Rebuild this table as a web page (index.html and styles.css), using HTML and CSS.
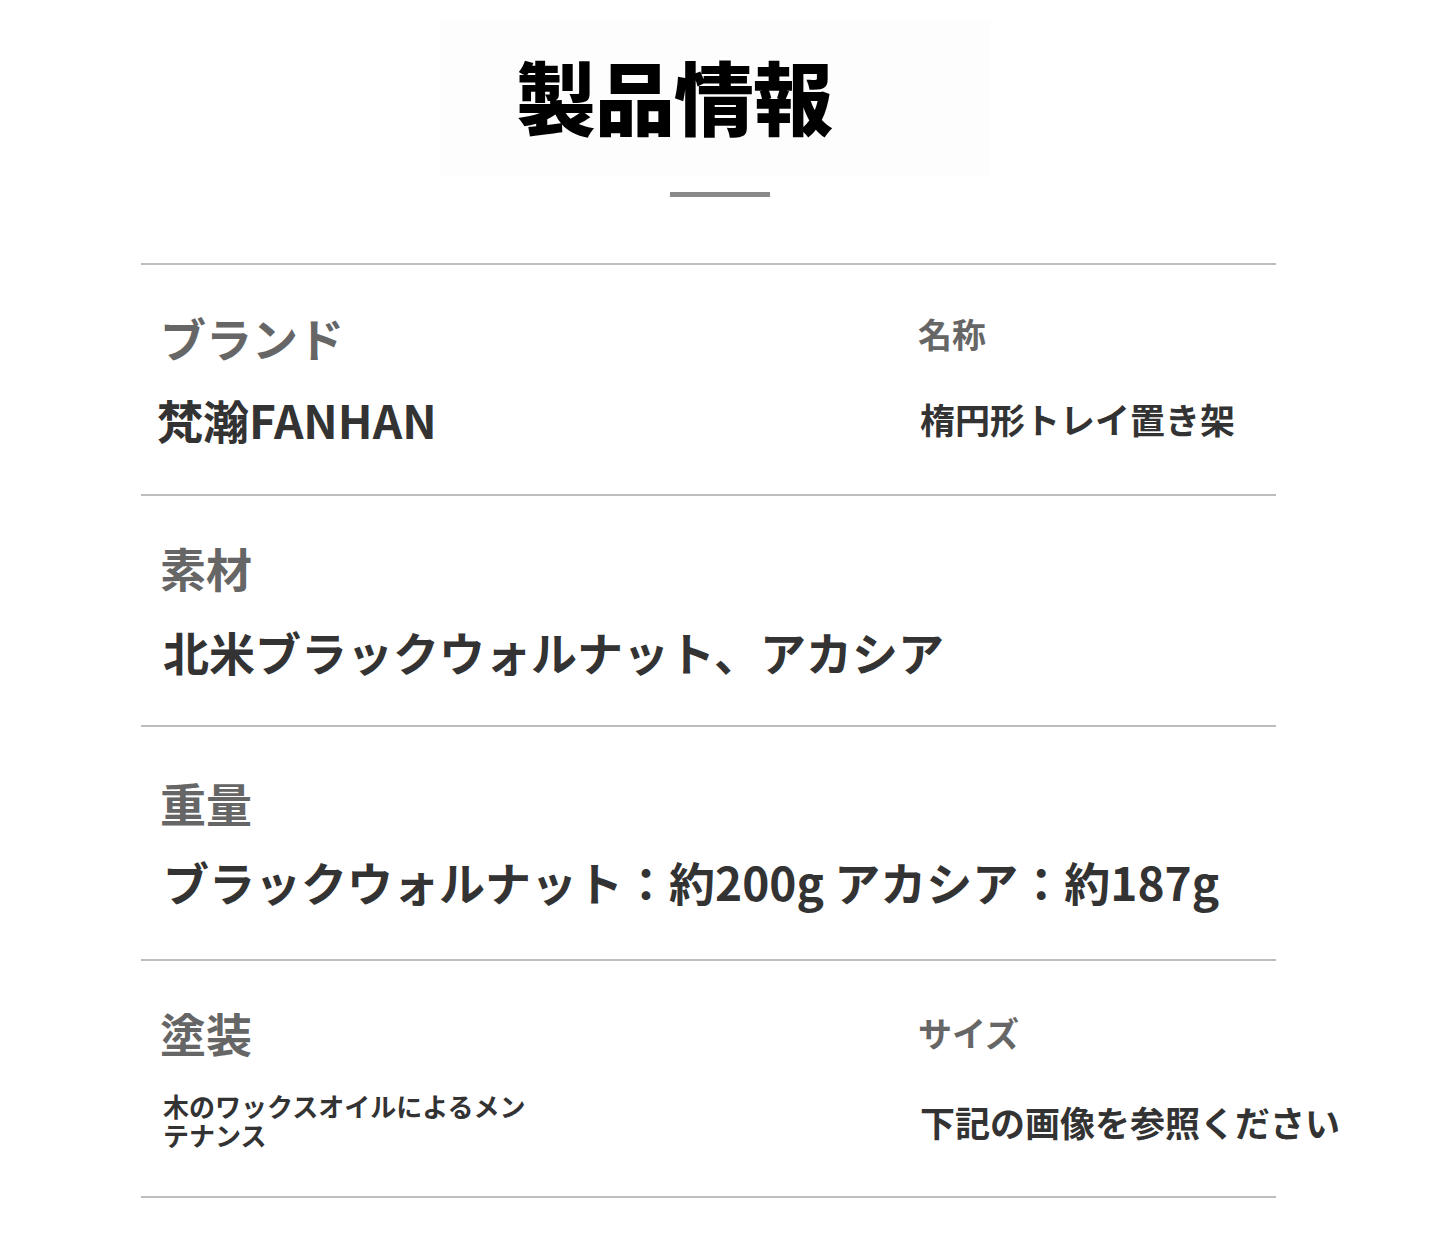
FILE: index.html
```html
<!DOCTYPE html>
<html lang="ja">
<head>
<meta charset="utf-8">
<title>製品情報</title>
<link rel="stylesheet" href="styles.css">
</head>
<body>
<div class="page">
  <header class="head">
    <h1 class="title">製品情報</h1>
  </header>
  <div class="rule-short"></div>

  <section class="table">
    <div class="row row-1">
      <div class="cell cell-left">
        <div class="label">ブランド</div>
        <div class="value">梵瀚FANHAN</div>
      </div>
      <div class="cell cell-right">
        <div class="label label-sm">名称</div>
        <div class="value value-sm">楕円形トレイ置き架</div>
      </div>
    </div>

    <div class="row row-2 row-single">
      <div class="cell cell-left">
        <div class="label">素材</div>
        <div class="value">北米ブラックウォルナット、アカシア</div>
      </div>
    </div>

    <div class="row row-3 row-single">
      <div class="cell cell-left">
        <div class="label">重量</div>
        <div class="value">ブラックウォルナット：約200g アカシア：約187g</div>
      </div>
    </div>

    <div class="row row-4">
      <div class="cell cell-left">
        <div class="label">塗装</div>
        <div class="value value-xs">木のワックスオイルによるメンテナンス</div>
      </div>
      <div class="cell cell-right">
        <div class="label label-sm">サイズ</div>
        <div class="value value-sm">下記の画像を参照ください</div>
      </div>
    </div>
  </section>
</div>
</body>
</html>
```

FILE: styles.css
```css
html, body {
  margin: 0;
  padding: 0;
  background: #ffffff;
}

body {
  font-family: "Noto Sans CJK JP", "Noto Sans", sans-serif;
  font-weight: 700;
}

.page {
  width: 1440px;
  height: 1241px;
  overflow: hidden;
}

.head {
  margin: 20px 0 0 440px;
  width: 474px;
  height: 121px;
  padding: 34px 0 0 76px;
  background: #fdfdfd;
}

.title {
  margin: 0;
  font-size: 80px;
  line-height: 1;
  font-weight: 900;
  color: #000;
  letter-spacing: -1px;
}

.rule-short {
  margin: 17px 0 0 670px;
  width: 100px;
  height: 5px;
  background: #888888;
}

.table {
  margin: 66px 0 0 141px;
  width: 1135px;
  border-bottom: 2px solid #bdbdbd;
}

.row {
  display: grid;
  grid-template-columns: 777px 1fr;
  border-top: 2px solid #bdbdbd;
}

.row-single {
  grid-template-columns: 1fr;
}

.cell {
  display: flex;
  flex-direction: column;
  align-items: flex-start;
}

.cell-left {
  padding: 49px 0 52px 19px;
}

.cell-right {
  padding: 52px 0 0 0;
}

.label {
  font-size: 46px;
  line-height: 1;
  color: #666666;
  white-space: nowrap;
}

.value {
  margin-top: 36px;
  font-size: 46px;
  line-height: 1;
  color: #333333;
  white-space: nowrap;
}

.row-1 .cell-left .value { margin-left: -3px; }

.label-sm {
  font-size: 34px;
}

.value-sm {
  margin-top: 50px;
  font-size: 35px;
  padding-left: 2px;
}

.value-xs {
  font-size: 26px;
  line-height: 29px;
  white-space: normal;
  width: 368px;
  padding-left: 3px;
}

.row-2 .cell-left { padding-top: 48px; padding-bottom: 51px; }
.row-2 .value { margin-top: 38px; padding-left: 3px; }

.row-3 .cell-left { padding-top: 52px; padding-bottom: 55px; }
.row-3 .value { margin-top: 33px; padding-left: 3px; }

.row-4 .cell-left { padding-top: 48px; padding-bottom: 47px; }
.row-4 .value-xs { margin-top: 36px; }
.row-4 .cell-right { padding-top: 55px; }
.row-4 .value-sm { margin-top: 54px; }
```
